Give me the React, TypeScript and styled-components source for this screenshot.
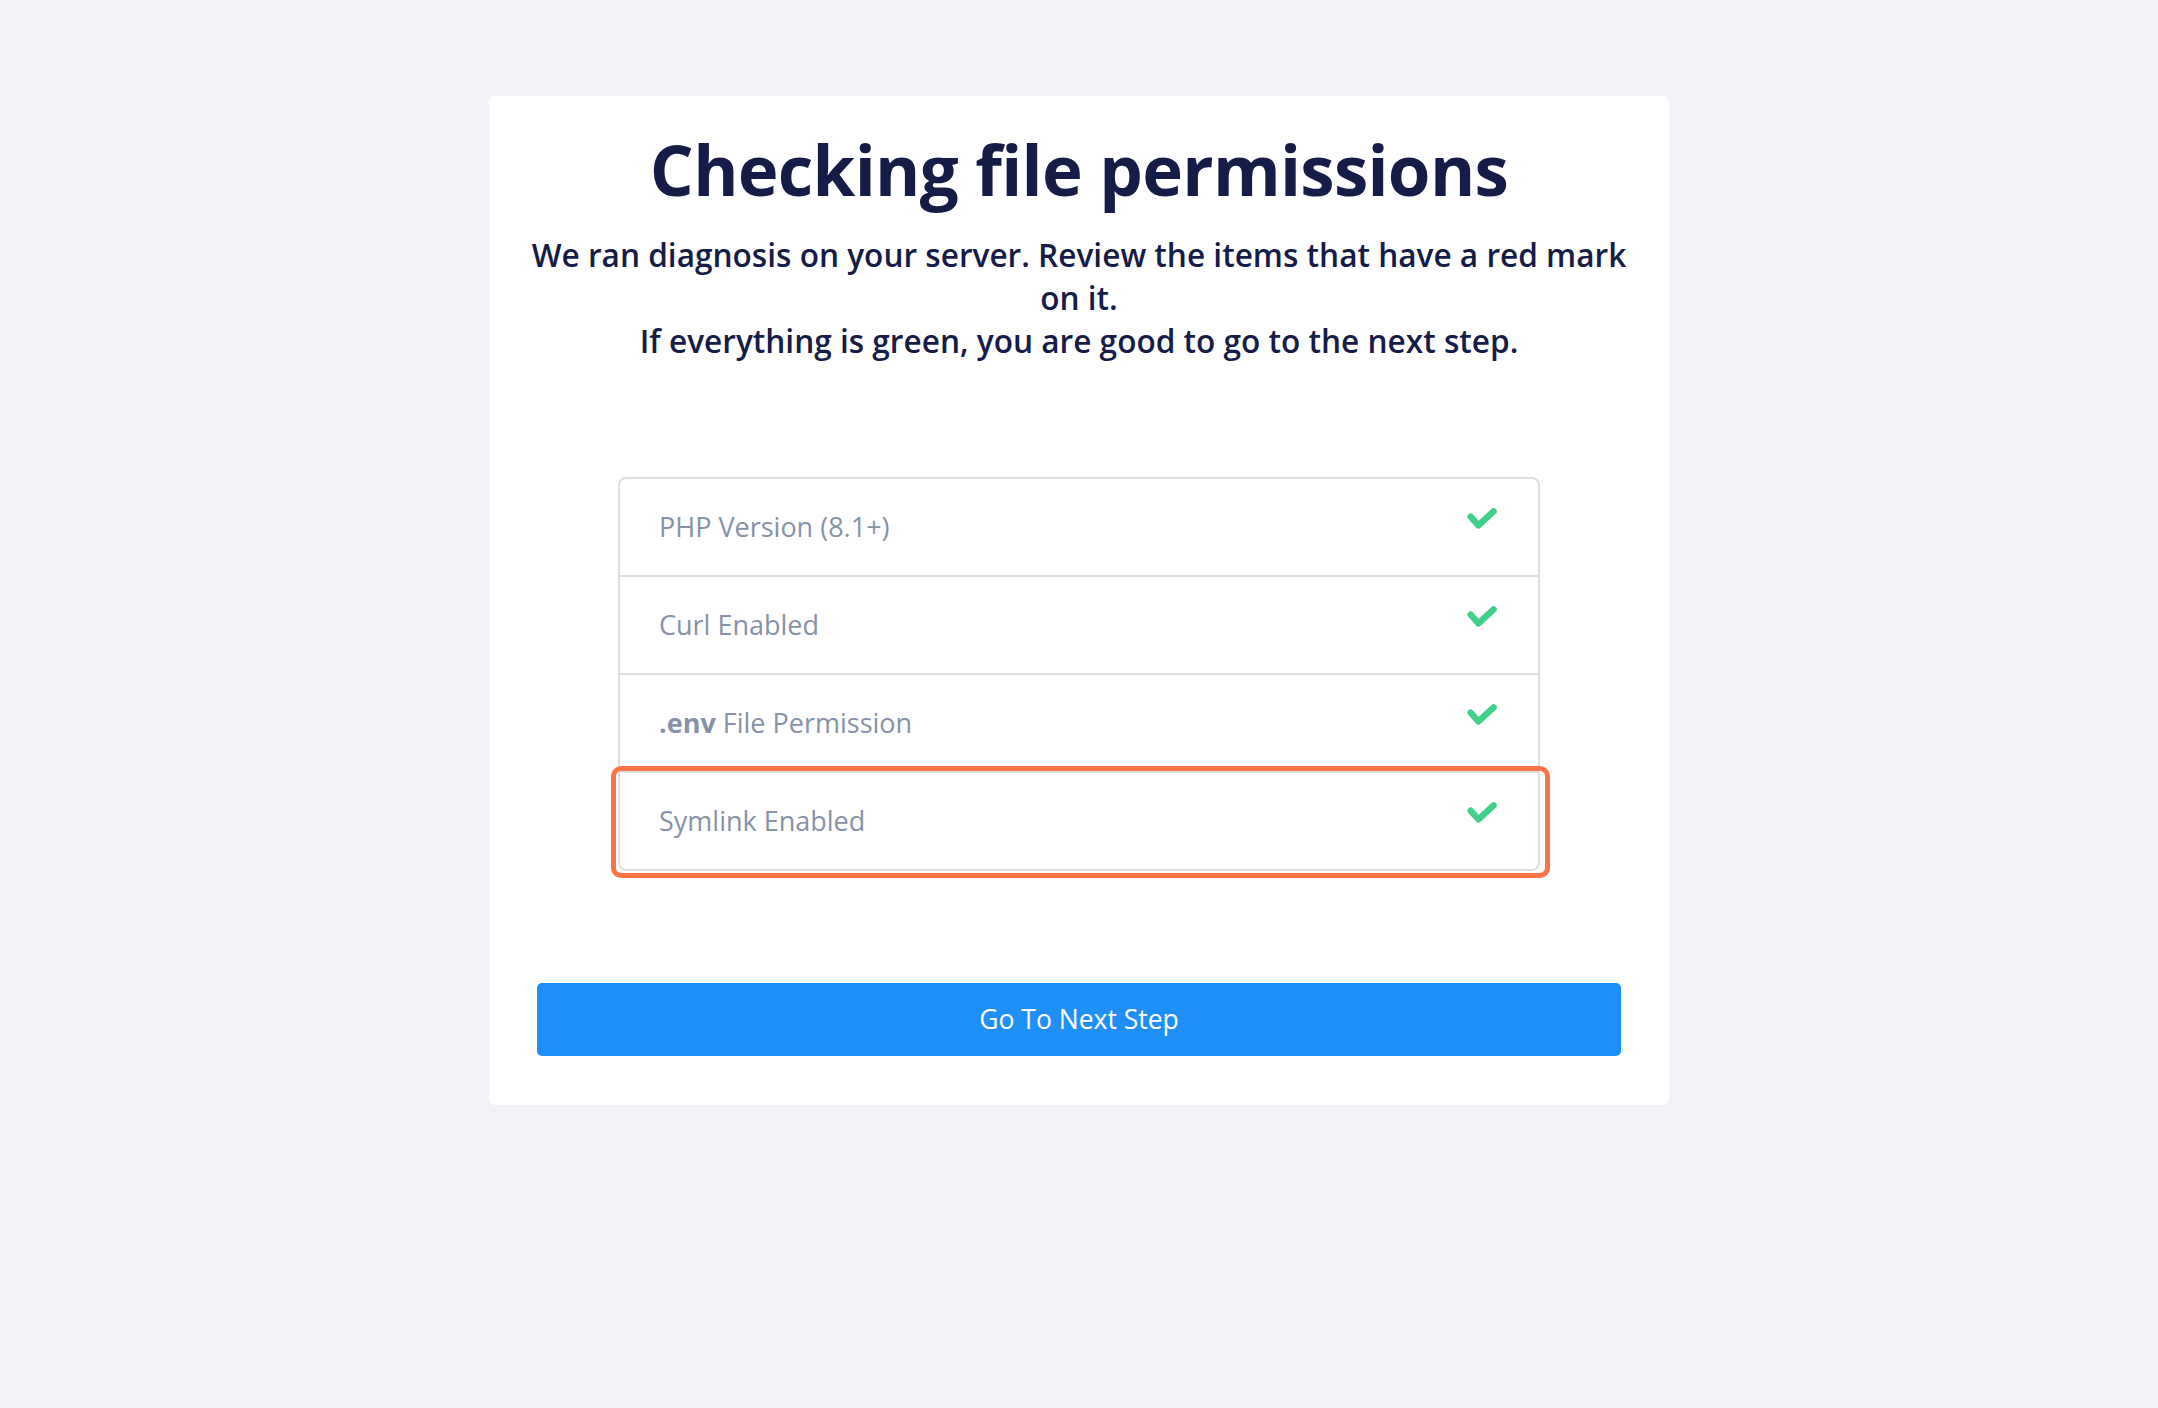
import React from 'react';
import styled, { createGlobalStyle } from 'styled-components';

const GlobalStyle = createGlobalStyle`
  body {
    margin: 0;
    background: #f2f3f7;
    font-family: 'Open Sans', 'Noto Sans', sans-serif;
  }
`;

const Page = styled.div`
  display: flex;
  justify-content: center;
  padding: 96px 0;
`;

const Card = styled.div`
  width: 1180px;
  box-sizing: border-box;
  background: #fff;
  border-radius: 6px;
  padding: 32px 48px 49px;
  color: #151c47;
`;

const Title = styled.h1`
  margin: 0;
  text-align: center;
  font-size: 69px;
  line-height: 1.2;
  font-weight: 700;
  letter-spacing: -0.7px;
`;

const Subtitle = styled.p`
  margin: 22px -6px 0;
  text-align: center;
  font-size: 31.6px;
  line-height: 43px;
  font-weight: 600;
`;

const CheckList = styled.div`
  width: 922px;
  box-sizing: border-box;
  margin: 115px auto 0;
  border: 2px solid #dedede;
  border-radius: 8px;
  background: #fff;
`;

const Row = styled.div<{ $highlight?: boolean }>`
  position: relative;
  display: flex;
  align-items: center;
  justify-content: space-between;
  height: 96px;
  padding: 0 41px 0 39px;
  color: #8592a8;
  font-size: 27px;

  & + & {
    border-top: 2px solid #dedede;
  }

  ${({ $highlight }) =>
    $highlight &&
    `
    &::after {
      content: '';
      position: absolute;
      top: -7px;
      left: -9px;
      right: -12px;
      bottom: -9px;
      border: 5px solid #fb7346;
      border-radius: 10px;
      pointer-events: none;
    }
  `}
`;

const Strong = styled.b`
  font-weight: 700;
`;

const CheckIcon = styled.svg`
  width: 30px;
  height: 22px;
  margin-bottom: 15px;
  flex-shrink: 0;
`;

const NextButton = styled.button`
  display: block;
  width: 100%;
  height: 73px;
  margin-top: 112px;
  border: none;
  border-radius: 5px;
  background: #1f8ff8;
  color: #fff;
  font-family: inherit;
  font-size: 26.5px;
  font-weight: 500;
  cursor: pointer;
`;

const Check = () => (
  <CheckIcon viewBox="0 0 30 22">
    <polyline
      points="3.6,8.6 11.4,17.4 26.6,3.4"
      fill="none"
      stroke="#40d08a"
      strokeWidth="6.4"
      strokeLinecap="round"
      strokeLinejoin="round"
    />
  </CheckIcon>
);

const items: { label: React.ReactNode; highlight?: boolean }[] = [
  { label: 'PHP Version (8.1+)' },
  { label: 'Curl Enabled' },
  { label: <><Strong>.env</Strong> File Permission</> },
  { label: 'Symlink Enabled', highlight: true },
];

export default function App() {
  return (
    <>
      <GlobalStyle />
      <Page>
        <Card>
          <Title>Checking file permissions</Title>
          <Subtitle>
            We ran diagnosis on your server. Review the items that have a red mark on it.
            <br />
            If everything is green, you are good to go to the next step.
          </Subtitle>
          <CheckList>
            {items.map((item, i) => (
              <Row key={i} $highlight={item.highlight}>
                <span>{item.label}</span>
                <Check />
              </Row>
            ))}
          </CheckList>
          <NextButton>Go To Next Step</NextButton>
        </Card>
      </Page>
    </>
  );
}
